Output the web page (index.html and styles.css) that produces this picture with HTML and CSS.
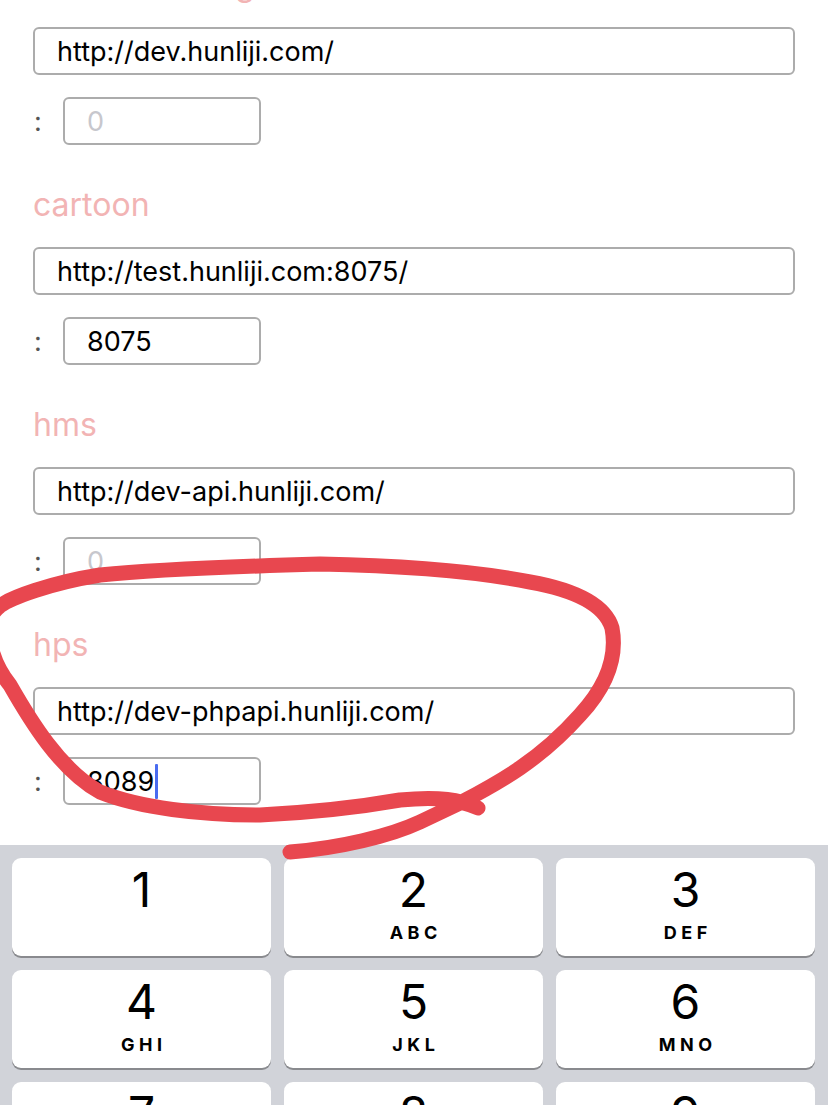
FILE: index.html
```html
<!DOCTYPE html>
<html lang="en">
<head>
  <meta charset="UTF-8">
  <meta name="viewport" content="width=device-width, initial-scale=1.0">
  <title>Server Settings</title>
  <link rel="stylesheet" href="styles.css">
</head>
<body>
  <div class="screen">
    <div class="form-area">
      <div class="form-list">

        <div class="section">
          <div class="label">default_setting</div>
          <div class="field url">http://dev.hunliji.com/</div>
          <div class="port-row">
            <span class="colon">:</span>
            <div class="field port placeholder">0</div>
          </div>
        </div>

        <div class="section">
          <div class="label">cartoon</div>
          <div class="field url">http://test.hunliji.com:8075/</div>
          <div class="port-row">
            <span class="colon">:</span>
            <div class="field port">8075</div>
          </div>
        </div>

        <div class="section">
          <div class="label">hms</div>
          <div class="field url">http://dev-api.hunliji.com/</div>
          <div class="port-row">
            <span class="colon">:</span>
            <div class="field port placeholder">0</div>
          </div>
        </div>

        <div class="section">
          <div class="label">hps</div>
          <div class="field url">http://dev-phpapi.hunliji.com/</div>
          <div class="port-row">
            <span class="colon">:</span>
            <div class="field port">8089<span class="caret"></span></div>
          </div>
        </div>

      </div>
    </div>

    <div class="keyboard">
      <div class="key"><span class="digit">1</span><span class="letters"></span></div>
      <div class="key"><span class="digit">2</span><span class="letters">ABC</span></div>
      <div class="key"><span class="digit">3</span><span class="letters">DEF</span></div>
      <div class="key"><span class="digit">4</span><span class="letters">GHI</span></div>
      <div class="key"><span class="digit">5</span><span class="letters">JKL</span></div>
      <div class="key"><span class="digit">6</span><span class="letters">MNO</span></div>
      <div class="key"><span class="digit">7</span><span class="letters">PQRS</span></div>
      <div class="key"><span class="digit">8</span><span class="letters">TUV</span></div>
      <div class="key"><span class="digit">9</span><span class="letters">WXYZ</span></div>
    </div>

    <!-- hand drawn mark over the hps block -->
    <svg class="scribble" width="828" height="1105" viewBox="0 0 828 1105">
      <path d="M290,852 C340,848 390,836 420,822 L460,803 C500,782 540,760 580,715 C605,688 618,660 612,628 C605,605 575,590 530,582 C480,572 420,566 320,564 C250,566 150,570 100,575 C50,583 10,598 0,606 C-20,620 -10,660 10,685 C30,720 60,770 100,792 C140,808 200,815 260,815 C320,812 360,807 400,800 C440,796 460,800 478,808" />
    </svg>
  </div>
</body>
</html>
```

FILE: styles.css
```css
body {
  margin: 0;
  padding: 0;
  background: #ffffff;
  font-family: Inter, "Noto Sans", sans-serif;
}

.screen {
  position: relative;
  width: 828px;
  height: 1105px;
  overflow: hidden;
  display: flex;
  flex-direction: column;
}

.form-area {
  height: 845px;
  flex: none;
  overflow: hidden;
}

/* page is scrolled, first label is cut off */
.form-list {
  margin-top: -53px;
}

.section {
  padding: 22px 33px 22px 33px;
}

.label {
  height: 40px;
  line-height: 31px;
  font-size: 32px;
  color: #f2b4b4;
  white-space: nowrap;
}

.field {
  box-sizing: border-box;
  height: 48px;
  border: 2px solid #acacac;
  border-radius: 6px;
  padding-left: 22px;
  display: flex;
  align-items: center;
  font-size: 27px;
  color: #000;
  white-space: nowrap;
}

.url {
  margin-top: 18px;
  width: 762px;
}

.port-row {
  margin-top: 22px;
  display: flex;
  align-items: center;
}

.colon {
  box-sizing: border-box;
  width: 30px;
  padding-left: 1px;
  font-size: 27px;
  color: #555;
}

.port {
  width: 198px;
}

.placeholder {
  color: #c7c7cd;
}

.caret {
  display: inline-block;
  width: 3px;
  height: 35px;
  margin-left: 1px;
  background: #4a6cf0;
  border-radius: 1px;
}

.keyboard {
  flex: 1;
  background: #d1d3d9;
  padding: 13px 13px 0 12px;
  display: grid;
  grid-template-columns: repeat(3, 259px);
  grid-auto-rows: 98px;
  column-gap: 13px;
  row-gap: 14px;
}

.key {
  background: #ffffff;
  border-radius: 9px;
  box-shadow: 0 2px 0 #898a8e;
  display: flex;
  flex-direction: column;
  align-items: center;
  padding-top: 8px;
  box-sizing: border-box;
}

.digit {
  font-size: 48px;
  line-height: 48px;
  color: #000;
}

.letters {
  margin-top: 10px;
  height: 18px;
  font-size: 18px;
  line-height: 18px;
  font-weight: 700;
  letter-spacing: 4.5px;
  padding-left: 4.5px;
  color: #000;
}

.scribble {
  position: absolute;
  top: 0;
  left: 0;
  pointer-events: none;
}

.scribble path {
  fill: none;
  stroke: #e8474f;
  stroke-width: 15;
  stroke-linecap: round;
  stroke-linejoin: round;
}
```
